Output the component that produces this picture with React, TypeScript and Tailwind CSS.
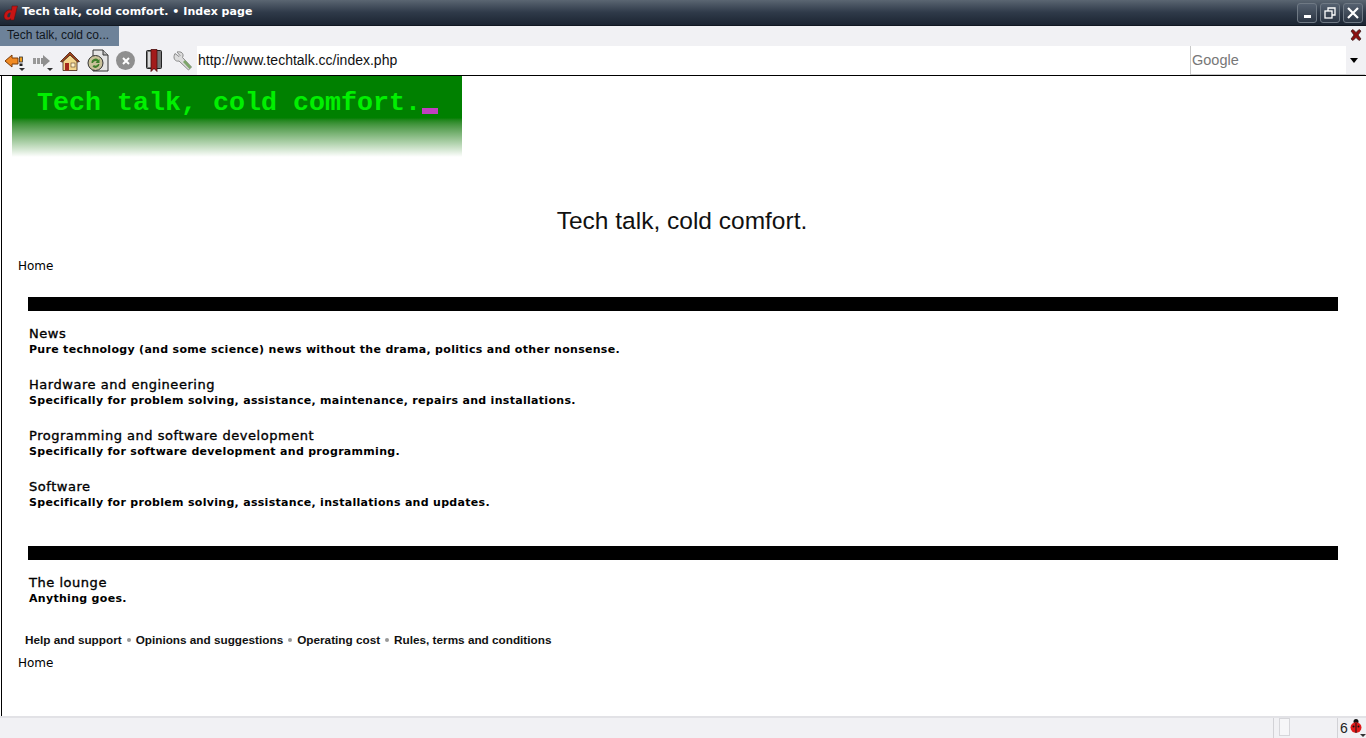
import React from 'react';

const forums = [
  { title: 'News', text: 'Pure technology (and some science) news without the drama, politics and other nonsense.' },
  { title: 'Hardware and engineering', text: 'Specifically for problem solving, assistance, maintenance, repairs and installations.' },
  { title: 'Programming and software development', text: 'Specifically for software development and programming.' },
  { title: 'Software', text: 'Specifically for problem solving, assistance, installations and updates.' },
];

const footerLinks = ['Help and support', 'Opinions and suggestions', 'Operating cost', 'Rules, terms and conditions'];

const Forum = ({ title, text }: { title: string; text: string }) => (
  <div className="h-[51px] pl-[27px] pt-[15px] font-['DejaVu_Sans',sans-serif] text-black">
    <div className="text-[13px] leading-[16px] tracking-[0.53px] [-webkit-text-stroke:0.35px_black]">{title}</div>
    <div className="text-[11px] leading-[15px] font-bold tracking-[0.3px]">{text}</div>
  </div>
);

const WinButton = ({ children }: { children: React.ReactNode }) => (
  <div className="w-[20px] h-[20px] rounded-[3px] border border-[#6f7984] bg-gradient-to-b from-[#556170] to-[#2c3644] flex items-center justify-center">
    {children}
  </div>
);

const Dropdot = () => <div className="absolute right-0 bottom-[-3px] border-x-[3px] border-t-[3px] border-x-transparent border-t-[#333]" />;

export default function App() {
  return (
    <div className="h-[738px] w-[1366px] overflow-hidden flex flex-col bg-white font-['Liberation_Sans',sans-serif]">
      {/* title bar */}
      <div className="h-[26px] shrink-0 flex items-center bg-gradient-to-b from-[#5b6672] via-[#2f3a49] to-[#1c2532] border-b border-[#111822]">
        <svg width="15" height="16" viewBox="0 0 15 16" className="ml-[3px]">
          <path d="M9 1h5.500L11 15H7.500l.3-1.300C6 15.300 3.500 15.500 2 14 .3 12 1 8.500 3 6.500 4.800 4.800 7 4.500 8.500 5.200Z" fill="#c81414" stroke="#5a0c0c" strokeWidth="0.500" />
          <path d="M7.800 7.500C6 7.300 4.500 9 4.300 10.800c-.2 1.500 1.200 2 2.500.9z" fill="#2a3442" />
        </svg>
        <span className="ml-[4px] text-[11px] tracking-[0.03px] font-bold text-white font-['DejaVu_Sans',sans-serif] whitespace-pre">Tech talk, cold comfort. • Index page</span>
        <div className="ml-auto mr-[3px] flex gap-[3px]">
          <WinButton><div className="w-[7px] h-[3px] bg-white mt-[8px]" /></WinButton>
          <WinButton>
            <svg width="12" height="12" viewBox="0 0 12 12" fill="none" stroke="white" strokeWidth="1.300">
              <rect x="1" y="4" width="7" height="7" />
              <path d="M4 4V1h7v7H8" />
            </svg>
          </WinButton>
          <WinButton>
            <svg width="12" height="12" viewBox="0 0 12 12" stroke="white" strokeWidth="2.200">
              <path d="M1 1l10 10M11 1L1 11" />
            </svg>
          </WinButton>
        </div>
      </div>

      {/* tab strip */}
      <div className="h-[20px] shrink-0 flex bg-[#f1f1f4]">
        <div className="w-[119px] bg-[#6d8299] pl-[7px] text-[12px] leading-[19px] text-[#10161d]">Tech talk, cold co...</div>
        <svg width="14" height="14" viewBox="0 0 14 14" className="ml-auto mr-[3px] mt-[2px]">
          <path d="M2 3l2-1.500 3 3 3-3 2 1.500-3 4 3 4-2 1.500-3-3-3 3-2-1.500 3-4z" fill="#8c1010" stroke="#3a1a1a" strokeWidth="0.800" />
        </svg>
      </div>

      {/* toolbar */}
      <div className="h-[30px] shrink-0 flex items-center bg-[#f1f1f4] border-b border-black">
        <div className="relative ml-[4px] w-[21px] h-[14px]">
          <svg width="20" height="14" viewBox="0 0 20 14">
            <path d="M1 7l7-6v3h6v6H8v3z" fill="#f08a24" stroke="#7a3a06" />
            <rect x="15.500" y="3" width="3" height="5" fill="#f0a020" stroke="#333" strokeWidth="0.800" />
            <rect x="15.500" y="9.500" width="3" height="2.500" fill="#222" />
          </svg>
          <Dropdot />
        </div>
        <div className="relative ml-[7px] w-[21px] h-[14px]">
          <svg width="20" height="14" viewBox="0 0 20 14">
            <rect x="1" y="4" width="3" height="6" fill="#999" />
            <rect x="5" y="4" width="3" height="6" fill="#999" />
            <path d="M9 4h2V1l7 6-7 6v-3H9z" fill="#8f8f8f" />
          </svg>
          <Dropdot />
        </div>
        <svg width="20" height="20" viewBox="0 0 20 20" className="ml-[7px]">
          <path d="M.5 10.500L10 1l9.500 9.500-2 .5L10 4l-7.500 7z" fill="#a5431c" stroke="#40210f" strokeWidth="0.800" />
          <path d="M3 10.500L10 4l7 6.500V19.500H3z" fill="#f3d58c" stroke="#40210f" strokeWidth="0.800" />
          <rect x="5" y="12" width="4" height="7.500" fill="#a5281c" />
          <rect x="11" y="12" width="4" height="4" fill="#fff3c8" stroke="#40210f" strokeWidth="0.500" />
        </svg>
        <svg width="22" height="23" viewBox="0 0 22 23" className="ml-[7px]">
          <path d="M6 1h10l5 5v16H6z" fill="#e5e5e5" stroke="#333" />
          <path d="M16 1v5h5" fill="#bbb" stroke="#333" />
          <circle cx="8.500" cy="14" r="7.500" fill="#c9c19a" stroke="#333" />
          <path d="M4.500 14a4 4 0 0 1 7-3l1-1v4h-4l1.500-1.500A2.500 2.500 0 0 0 6 14zM12.500 15a4 4 0 0 1-7 2.500l1.500-1.500a2.500 2.500 0 0 0 4-1z" fill="#3f7f2a" />
        </svg>
        <div className="ml-[7px] w-[19px] h-[19px] rounded-full bg-[#8f8f8f] flex items-center justify-center">
          <svg width="8" height="8" viewBox="0 0 8 8" stroke="white" strokeWidth="2"><path d="M1 1l6 6M7 1L1 7" /></svg>
        </div>
        <svg width="16" height="23" viewBox="0 0 16 23" className="ml-[11px]">
          <rect x=".5" y="1.500" width="15" height="18" rx="1" fill="#777" stroke="#222" />
          <rect x="2" y="3" width="3" height="15" fill="#d8d8d8" />
          <path d="M5 .5h6v22l-3-3-3 3z" fill="#a31b1b" stroke="#4a0c0c" strokeWidth="0.800" />
        </svg>
        <svg width="20" height="20" viewBox="0 0 20 20" className="ml-[11px]">
          <path d="M2 2.500l4 3 1-1-3-3.500c4-1 7.500 1.500 5.500 5.500l9 9.500-3 3L6 10C2 11-.5 7 2 2.500z" fill="#dcdcdc" stroke="#8a8a8a" />
          <path d="M10 11l6.500 7 2-2-6.500-7z" fill="#7da56a" />
        </svg>
        <div className="ml-[4px] w-[993px] h-[29px] bg-white pl-[1px] text-[14px] leading-[28px] text-[#111]">http://www.techtalk.cc/index.php</div>
        <div className="w-[175px] h-[29px] flex bg-white border-l border-[#c9c9c9] border-b">
          <div className="flex-1 pl-[1px] text-[14.500px] leading-[28px] text-[#777]">Google</div>
          <div className="w-[19px] pr-[3px] bg-[#f1f1f4] flex items-center justify-center">
            <div className="border-x-[4px] border-t-[5px] border-x-transparent border-t-black" />
          </div>
        </div>
      </div>

      {/* page */}
      <div className="flex-1 min-h-0 ml-[1px] border-l border-black">
        <div className="ml-[10px] w-[450px] h-[81px] flex flex-col">
          <div className="h-[42px] bg-[#008000] pl-[25px] flex items-center shrink-0">
            <span className="font-['Liberation_Mono',monospace] font-bold text-[26.670px] leading-none text-[#00f000] mt-[12px] whitespace-pre">Tech talk, cold comfort.</span>
            <div className="ml-[1px] w-[16px] h-[6px] bg-[#c040c0] self-end mb-[4px]" />
          </div>
          <div className="flex-1 bg-gradient-to-b from-[#008000] to-white" />
        </div>

        <div className="mt-[50px] h-[28px] text-center text-[24.500px] leading-[28px] text-[#111] pr-[4px]">Tech talk, cold comfort.</div>
        <div className="mt-[23px] pl-[16px] text-[12px] leading-[16px] text-black font-['DejaVu_Sans',sans-serif]">Home</div>

        <div className="mt-[23px] ml-[26px] w-[1310px] h-[14px] bg-black" />
        {forums.map((f) => <Forum key={f.title} {...f} />)}

        <div className="mt-[31px] ml-[26px] w-[1310px] h-[14px] bg-black" />
        <Forum title="The lounge" text="Anything goes." />

        <div className="mt-[21px] pl-[23px] flex items-center text-[11.750px] leading-[16px] font-bold text-[#111]">
          {footerLinks.map((l, i) => (
            <React.Fragment key={l}>
              {i > 0 && <span className="mx-[5px] w-[4px] h-[4px] rounded-full bg-[#999]" />}
              <span>{l}</span>
            </React.Fragment>
          ))}
        </div>
        <div className="mt-[7px] pl-[16px] text-[12px] leading-[16px] text-black font-['DejaVu_Sans',sans-serif]">Home</div>
      </div>

      {/* status bar */}
      <div className="h-[22px] shrink-0 flex bg-[#f1f1f4] border-t-2 border-[#e2e2e6]">
        <div className="flex-1" />
        <div className="w-[64px] border-l border-[#d2d2d6] pl-[5px]">
          <div className="w-[11px] h-[18px] border border-[#d6d6da] bg-[#f6f6f8]" />
        </div>
        <div className="w-[29px] relative border-l border-[#d2d2d6] pl-[2px] text-[14px] leading-[20px] text-[#222]">
          6
          <svg width="12" height="14" viewBox="0 0 12 14" className="absolute left-[12px] top-[1px]">
            <circle cx="6" cy="2.500" r="2.500" fill="#111" />
            <ellipse cx="6" cy="8.500" rx="5.500" ry="5.200" fill="#e01a1a" />
            <path d="M6 4v10" stroke="#111" />
            <circle cx="3.500" cy="7.500" r="1" fill="#111" />
            <circle cx="8.500" cy="7.500" r="1" fill="#111" />
          </svg>
          <div className="absolute right-[0px] bottom-[1px] border-x-[3px] border-t-[3px] border-x-transparent border-t-[#333]" />
        </div>
      </div>
    </div>
  );
}
